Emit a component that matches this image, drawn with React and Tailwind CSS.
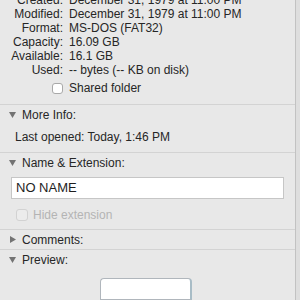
import React from "react";

const font = { fontFamily: '"Liberation Sans", Arial, sans-serif' };

function Row({ label, value }) {
  return (
    <div className="flex h-[14px] items-center leading-[14px]">
      <div className="w-[63px] text-right">{label}</div>
      <div className="ml-[6px] whitespace-nowrap">{value}</div>
    </div>
  );
}

function Down() {
  return (
    <svg width="7" height="6" viewBox="0 0 7 6" className="ml-[9px] mr-[6px]">
      <polygon points="0,0 7,0 3.5,6" fill="#737373" />
    </svg>
  );
}
function Right() {
  return (
    <svg width="6" height="7" viewBox="0 0 6 7" className="ml-[10px] mr-[6px]">
      <polygon points="0,0 6,3.5 0,7" fill="#737373" />
    </svg>
  );
}

function Sep() {
  return <div className="h-px bg-[#d3d3d3]" />;
}

export default function App() {
  return (
    <div
      className="flex h-[300px] w-[300px] overflow-hidden bg-[#e8e8e8] text-[12px] text-[#262626]"
      style={font}
    >
      <div className="flex w-[295px] flex-col">
        <div className="mt-[-7px] flex flex-col">
          <Row label="Created:" value="December 31, 1979 at 11:00 PM" />
          <Row label="Modified:" value="December 31, 1979 at 11:00 PM" />
          <Row label="Format:" value="MS-DOS (FAT32)" />
          <Row label="Capacity:" value="16.09 GB" />
          <Row label="Available:" value="16.1 GB" />
          <Row label="Used:" value="-- bytes (-- KB on disk)" />
          <div className="mt-[4px] flex h-[14px] items-center">
            <div className="ml-[52px] h-[11px] w-[11px] rounded-[3px] border border-[#a9a9a9] bg-white" />
            <span className="ml-[6px]">Shared folder</span>
          </div>
        </div>
        <div className="mt-[9px]">
          <Sep />
        </div>
        <div className="mt-[3px] flex h-[14px] items-center">
          <Down />
          <span>More Info:</span>
        </div>
        <div className="mt-[8px] flex h-[14px] items-center pl-[15px]">
          Last opened: Today, 1:46 PM
        </div>
        <div className="mt-[8px]">
          <Sep />
        </div>
        <div className="mt-[3px] flex h-[14px] items-center">
          <Down />
          <span>Name &amp; Extension:</span>
        </div>
        <div className="ml-[11px] mt-[7px] flex h-[22px] w-[273px] items-center border border-[#c6c6c6] bg-white pl-[4px] text-[13px] text-[#1e1e1e]">
          NO NAME
        </div>
        <div className="mt-[10px] flex h-[12px] items-center">
          <div className="ml-[16px] h-[12px] w-[12px] rounded-[3px] border border-[#d2d2d2] bg-[#ececec]" />
          <span className="ml-[5px] text-[#b4b4b4]">Hide extension</span>
        </div>
        <div className="mt-[8px]">
          <Sep />
        </div>
        <div className="mt-[3px] flex h-[14px] items-center">
          <Right />
          <span>Comments:</span>
        </div>
        <div className="mt-[2px]">
          <Sep />
        </div>
        <div className="mt-[3px] flex h-[14px] items-center">
          <Down />
          <span>Preview:</span>
        </div>
        <div className="ml-[100px] mt-[11px] h-[30px] w-[92px] rounded-t-[4px] border border-[#b0b6bc] border-r-2 border-r-[#a8bcc6] bg-white" />
      </div>
      <div className="h-full w-px bg-[#c2c2c2]" />
      <div className="h-full w-[4px] bg-[#dedede]" />
    </div>
  );
}
